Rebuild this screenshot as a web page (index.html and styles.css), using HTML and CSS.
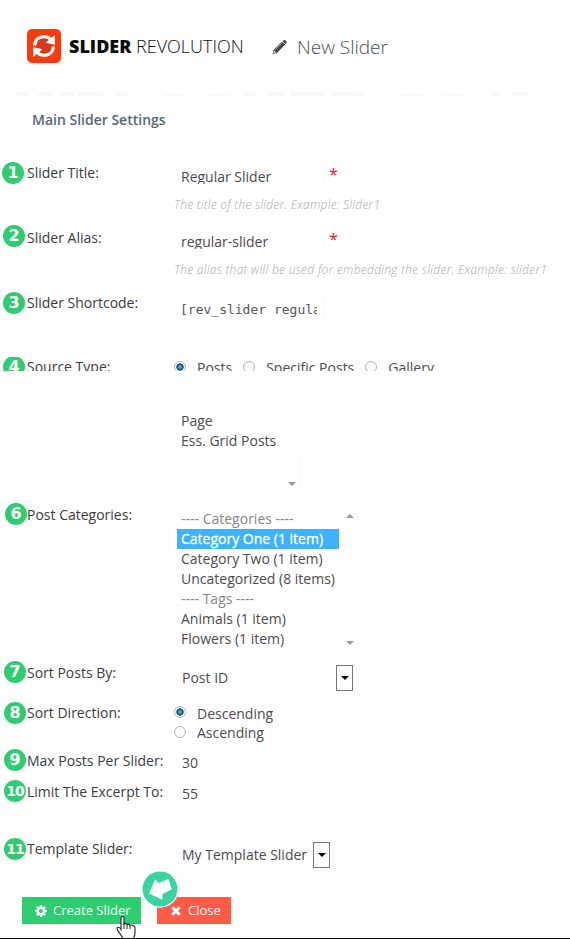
FILE: index.html
```html
<!DOCTYPE html>
<html lang="en">
<head>
<meta charset="utf-8">
<title>Slider Revolution - New Slider</title>
<link rel="stylesheet" href="styles.css">
</head>
<body>
<header class="header">
  <svg class="logo" width="34" height="34" viewBox="0 0 34 34">
    <rect width="34" height="34" rx="5" fill="#fb3a10"/>
    <circle cx="17" cy="17" r="8" fill="#d63a1a"/>
    <g fill="none" stroke="#fff" stroke-width="3.2">
      <path d="M7.600 16.500C8 10.500 12.500 7.700 17 7.700c3 0 5.500 1.200 7 3"/>
      <path d="M26.400 17.500c-.4 6-4.900 8.800-9.400 8.800-3 0-5.500-1.200-7-3"/>
    </g>
    <path d="M27.800 6v9.800l-9.300-2zM6.200 28v-9.800l9.300 2z" fill="#fff"/>
  </svg>
  <div class="brand"><b>SLIDER</b> <span>REVOLUTION</span></div>
  <svg class="pencil" width="16" height="16" viewBox="0 0 16 16">
    <path d="M.5 15.500l1-4.500L11 1.700q1.500-1.500 3 0t0 3L5 14z" fill="#494949"/>
    <path d="M1.500 14.500l.7-2.700 2 2zM3 11l8-8" fill="#ddd" stroke="#aaa" stroke-width=".8"/>
    <path d="M10.500 2.500l3 3" stroke="#fff" stroke-width=".8"/>
  </svg>
  <h1 class="page-title">New Slider</h1>
</header>
<svg class="ghost" width="570" height="4" viewBox="0 0 570 4" fill="#f8f8f8">
  <path d="M15 0h12l1 4H16zM39 0h12l1 4H38zM62 0h12l-1 4H61zM77 0h22q5 1 7 4H77zM115 0h12v4h-12zM162 4q10-6 24 0zM206 4q11-6 25 0zM243 0h12v4h-12zM270 0h15l-4 4h-15zM290 0h34v4h-34zM331 0h26q5 1 7 4h-33zM397 4q13-6 27 0zM441 4q12-6 27 0zM491 0h6l2 4h-8zM513 0h16v4h-18z"/>
</svg>
<h2 class="section-title">Main Slider Settings</h2>

<main class="form">
  <section class="row row-tall">
    <i class="badge b1">1</i><label class="label">Slider Title:</label>
    <div class="value">
      <div class="line"><div class="input">Regular Slider</div><span class="required">*</span></div>
      <p class="hint hint-title">The title of the slider. Example: Slider1</p>
    </div>
  </section>
  <section class="row row-tall">
    <i class="badge b2">2</i><label class="label">Slider Alias:</label>
    <div class="value">
      <div class="line"><div class="input">regular-slider</div><span class="required">*</span></div>
      <p class="hint hint-alias">The alias that will be used for embedding the slider. Example: slider1</p>
    </div>
  </section>
  <section class="row row-code">
    <i class="badge b3">3</i><label class="label">Slider Shortcode:</label>
    <div class="value"><div class="input code"><span>[rev_slider regula</span></div></div>
  </section>
  <section class="row row-source">
    <i class="badge b4">4</i><label class="label">Source Type:</label>
    <div class="value radios">
      <i class="radio on"></i><span class="opt-posts">Posts</span>
      <i class="radio"></i><span class="opt-specific">Specific Posts</span>
      <i class="radio"></i><span>Gallery</span>
    </div>
  </section>
  <section class="row row-types">
    <i></i><i></i>
    <div class="value">
      <div class="option">Page</div><div class="option">Ess. Grid Posts</div>
      <div class="list-end"><i class="arrow down"></i></div>
    </div>
  </section>
  <section class="row row-cats">
    <i class="badge b6">6</i><label class="label">Post Categories:</label>
    <div class="value list">
      <div class="options">
        <div class="option muted">---- Categories ----</div>
        <div class="option selected">Category One (1 item)</div>
        <div class="option">Category Two (1 item)</div>
        <div class="option">Uncategorized (8 items)</div>
        <div class="option muted">---- Tags ----</div>
        <div class="option">Animals (1 item)</div>
        <div class="option">Flowers (1 item)</div>
      </div>
      <div class="scroll"><i class="arrow up"></i><i class="arrow down"></i></div>
    </div>
  </section>
  <section class="row row-sort">
    <i class="badge b7">7</i><label class="label">Sort Posts By:</label>
    <div class="value select select-sort"><span>Post ID</span><i class="drop"></i></div>
  </section>
  <section class="row row-direction">
    <i class="badge b8">8</i><label class="label">Sort Direction:</label>
    <div class="value directions">
      <div class="choice"><i class="radio on"></i><span>Descending</span></div>
      <div class="choice"><i class="radio"></i><span>Ascending</span></div>
    </div>
  </section>
  <section class="row row-max">
    <i class="badge b9">9</i><label class="label">Max Posts Per Slider:</label>
    <div class="value number">30</div>
  </section>
  <section class="row row-excerpt">
    <i class="badge b10">10</i><label class="label">Limit The Excerpt To:</label>
    <div class="value number">55</div>
  </section>
  <section class="row row-template">
    <i class="badge b11">11</i><label class="label">Template Slider:</label>
    <div class="value select select-template"><span>My Template Slider</span><i class="drop"></i></div>
  </section>
</main>

<footer class="actions">
  <div class="btn create">
    <svg width="12" height="12" viewBox="0 0 12 12"><circle cx="6" cy="6" r="3.300" fill="none" stroke="#fff" stroke-width="2.500"/><path d="M6 0v2.500M6 9.500V12M0 6h2.500M9.500 6H12M1.800 1.800l1.700 1.700M8.500 8.500l1.700 1.700M1.800 10.200l1.700-1.700M8.500 3.500l1.700-1.700" stroke="#fff" stroke-width="2.200"/></svg>
    <span>Create Slider</span>
  </div>
  <div class="btn close">
    <svg width="10" height="10" viewBox="0 0 10 10"><path d="M1.300 1.300l7.400 7.400M8.700 1.300L1.300 8.700" stroke="#fff" stroke-width="3"/></svg>
    <span>Close</span>
  </div>
  <svg class="pointer" width="38" height="38" viewBox="0 0 38 38">
    <circle cx="19" cy="19" r="18.800" fill="#fff"/><circle cx="19" cy="19" r="17.500" fill="#39d4a0"/>
    <path d="M14.200 9.500L8 23.500l13.300 6.300.2-5.600 9.200-5L27.500 9l-9.700 4z" fill="#fff"/>
  </svg>
  <svg class="cursor" width="20" height="23" viewBox="0 0 20 23">
    <path d="M7 23C6 19 1 15 1 12.500c0-2 2.500-1.500 4 1V2q0-1.500 1.500-1.500T8 2v6q2-1.500 3 .5 2-1 3 .8 2-.8 3 .7 1.500-.3 2 1.500v5q0 3-1.500 6.500" fill="#fff" stroke="#222" stroke-width="1.100"/>
    <path d="M8 8v5M11 8.500V13M14 9.500V13" stroke="#222"/>
  </svg>
</footer>
</body>
</html>
```

FILE: styles.css
```css
* { box-sizing: border-box; }
body { margin: 0; height: 939px; overflow: hidden; display: flex; flex-direction: column; background: #fefefe; color: #4c4c50; font: 14px/20px "Open Sans", sans-serif; border-bottom: 1px solid #111; }
h1, h2, p { margin: 0; }
i { font-style: normal; display: block; }
svg { display: block; flex: none; }

.header { display: flex; height: 92px; padding: 29px 0 0 27px; flex: none; }
.brand { width: 174px; margin: 5px 0 0 8px; font-size: 18px; line-height: 24px; color: #111; white-space: nowrap; }
.brand b { font-weight: 800; color: #050a0a; }
.brand span { font-weight: 300; }
.pencil { margin: 10px 0 0 29px; }
.page-title { margin: 5px 0 0 9px; font-size: 19px; line-height: 26px; font-weight: 300; color: #4a4f58; white-space: nowrap; }
.section-title { height: 67px; padding: 14px 0 0 32px; font-size: 14px; line-height: 20px; font-weight: 600; color: #55697b; flex: none; }

.form { display: flex; flex-direction: column; flex: none; }
.row { display: grid; grid-template-columns: 27px 147px 1fr; align-items: start; white-space: nowrap; }
.label { color: #3c3c40; }
.row-tall { height: 65px; }
.row-code { height: 64px; }
.row-source { height: 14px; overflow: hidden; margin-bottom: 40px; }
.row-types { height: 94px; }
.row-cats { height: 158px; }
.row-sort { height: 40px; }
.row-direction { height: 48px; }
.row-max { height: 31px; }
.row-excerpt { height: 57px; }
.row-template { height: 41px; }

.badge { width: 22px; height: 22px; border-radius: 50%; background: #2fcc71; color: #fff; font-family: "DejaVu Sans", sans-serif; font-weight: 700; font-size: 16px; line-height: 22px; text-align: center; }
.b1 { margin: -1px 0 0 2px; }
.b2 { margin: -3px 0 0 3px; }
.b3 { margin: -1px 0 0 3px; }
.b4 { margin: -1px 0 0 3px; }
.b6 { margin: -2px 0 0 5px; }
.b7, .b8, .b9, .b10, .b11 { margin: -1px 0 0 4px; }
.b7 { margin-top: -2px; }
.b9 { margin-top: -2px; }
.b10 { margin-top: -2px; }
.b10, .b11 { font-size: 14px; letter-spacing: -1px; }

.line { display: flex; }
.input { width: 150px; height: 19px; margin-top: 2px; padding: 2px 6px 0; overflow: hidden; border: 1px solid #fafafa; border-bottom: 0; line-height: 18px; }
.required { height: 17px; margin: 1px 0 0 5px; color: #f01428; font-size: 16px; }
.hint { margin-top: 12px; font-size: 12px; line-height: 18px; font-weight: 300; font-style: italic; color: #aaa; letter-spacing: .25px; }
.hint-alias { letter-spacing: .285px; }
.code { height: 28px; padding-top: 4px; font: 13px/20px "DejaVu Sans Mono", monospace; color: #555; }
.code span { display: block; width: 137px; margin-left: -1px; overflow: hidden; }
.radios { display: flex; }
.radio { width: 12px; height: 12px; flex: none; border: 1px solid #b5b5b5; border-radius: 50%; background: #fafafa; }
.radio.on { background: radial-gradient(circle at 5px 5px, #7ccdf0 0, #1f78b0 2px, #103e64 3.300px, #fff 4px); }
.radios .radio { margin-top: 4px; }
.radios span { margin: 1px 11px 0; }

.option { height: 20px; padding-left: 7px; }
.list-end { display: flex; width: 127px; height: 41px; margin-top: 2px; padding: 29px 4px 0; justify-content: flex-end; border: 1px solid #fafafa; border-top: 0; }
.list { display: flex; width: 184px; padding-top: 4px; }
.options { width: 165px; }
.options .option { margin-left: 3px; padding-left: 4px; }
.option.muted { color: #888; }
.option.selected { background: #3fb1fd; color: #fff; -webkit-text-stroke: .3px #fff; }
.scroll { display: flex; flex-direction: column; justify-content: space-between; width: 19px; padding: 5px 0 4px 7px; border-right: 1px solid #fafafa; }
.arrow { width: 8px; height: 4px; background: #999; }
.up { clip-path: polygon(50% 0, 100% 100%, 0 100%); }
.down { clip-path: polygon(0 0, 100% 0, 50% 100%); }

.select { display: flex; padding-left: 8px; }
.select span { margin-top: 5px; }
.select .drop { width: 17px; height: 26px; margin-top: 2px; border: 1px solid #777; display: grid; place-items: center; background: #fdfdfd; }
.drop::after { content: ""; border: 4px solid transparent; border-top-color: #000; border-bottom: 0; }
.select-sort { width: 179px; justify-content: space-between; }
.select-template { width: 156px; justify-content: space-between; }
.select-template .drop { margin-top: 3px; }
.select-template span { margin-top: 6px; }
.directions .choice { display: flex; height: 19px; }
.choice span { margin: 1px 0 0 11px; }
.choice .radio { margin-top: 3px; }
.choice + .choice .radio { margin-top: 4px; }
.number { padding: 2px 0 0 8px; }

.actions { position: relative; display: flex; gap: 16px; padding: 17px 0 0 22px; flex: none; }
.btn { display: flex; align-items: center; height: 27px; color: #fff; font-size: 13px; white-space: nowrap; }
.btn span { margin-top: -2px; }
.create { width: 119px; padding-left: 13px; gap: 6px; background: #2dcd70; }
.close { width: 74px; padding-left: 14px; gap: 7px; background: #ff5b49; }
.pointer { position: absolute; left: 141px; top: -10px; }
.cursor { position: absolute; left: 116px; top: 36px; }
```
